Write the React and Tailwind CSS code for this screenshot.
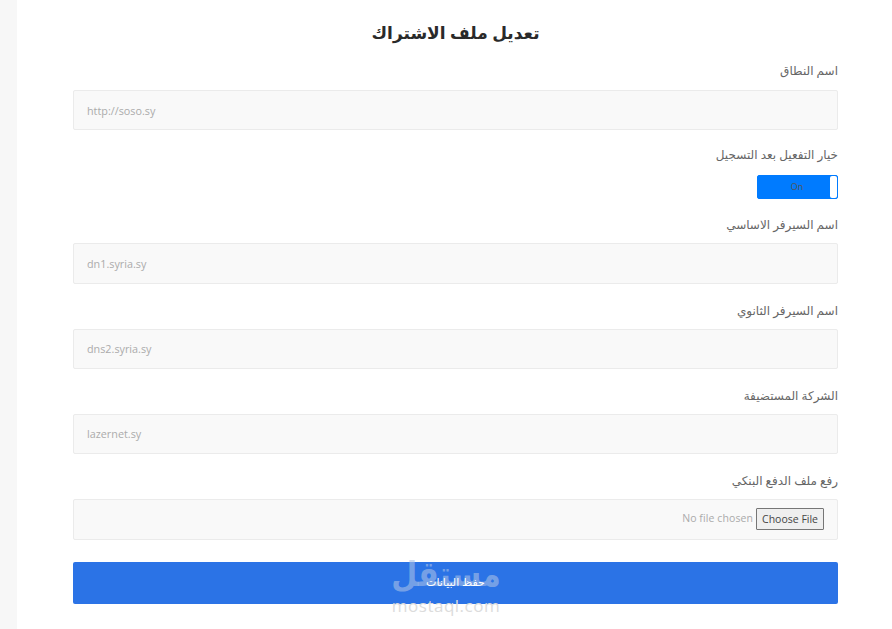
import React from 'react';

function Field({ label, value, className }) {
  return (
    <div className={className}>
      <label className="block h-[16px] text-[12px] leading-[16px] text-[#666]">{label}</label>
      <input
        readOnly
        dir="ltr"
        placeholder={value}
        className="mt-[10px] block h-[40.5px] w-full rounded-[2px] border border-[#ebebeb] bg-[#f9f9f9] px-[13px] text-left text-[10.8px] text-[#777] outline-none placeholder:text-[#ababab]"
      />
    </div>
  );
}

export default function App() {
  return (
    <div dir="rtl" className="relative flex h-[629px] w-[892px] overflow-hidden bg-white font-['Open_Sans','DejaVu_Sans',sans-serif]">
      <main className="flex w-[875px] flex-col pl-[56px] pr-[54px]">
        <h1 className="mt-[22px] h-[22px] text-center text-[17px] font-bold leading-[22px] text-[#2a2a2a]">تعديل ملف الاشتراك</h1>

        <Field label="اسم النطاق" value="http://soso.sy" className="mt-[19px] [&_input]:mt-[11px] [&_input]:h-[40px]" />

        <label className="mt-[17px] block h-[16px] text-[12px] leading-[16px] text-[#666]">خيار التفعيل بعد التسجيل</label>
        <div dir="ltr" className="mt-[12px] flex h-[24px] w-[81px] self-start rounded-[2px] border border-[#007bff] bg-[#007bff]">
          <span className="flex-1 pl-[6px] text-center text-[9px] leading-[22px] text-[#555]">On</span>
          <span className="h-full w-[7px] rounded-[2px] bg-white" />
        </div>

        <Field label="اسم السيرفر الاساسي" value="dn1.syria.sy" className="mt-[18px]" />
        <Field label="اسم السيرفر الثانوي" value="dns2.syria.sy" className="mt-[19px]" />
        <Field label="الشركة المستضيفة" value="lazernet.sy" className="mt-[18.5px]" />

        <label className="mt-[18.5px] block h-[16px] text-[12px] leading-[16px] text-[#666]">رفع ملف الدفع البنكي</label>
        <div className="mt-[10px] flex h-[41px] items-center gap-[3px] rounded-[2px] border border-[#ebebeb] bg-[#f9f9f9] px-[13px]">
          <button dir="ltr" className="h-[22px] rounded-[1px] border border-[#767676] bg-[#efefef] px-[5px] text-[10.5px] leading-[20px] text-[#444]">Choose File</button>
          <span dir="ltr" className="text-[10.5px] tracking-[0.1px] text-[#ababab]">No file chosen</span>
        </div>

        <button className="mt-[22px] h-[42px] w-full rounded-[2px] bg-[#2b73e6] text-[11px] text-white">
          <span className="relative z-10">حفظ البيانات</span>
        </button>
      </main>

      <aside className="w-[17px] bg-[#f7f7f7]" />

      {/* watermark */}
      <div dir="ltr" className="pointer-events-none absolute left-[391px] top-[556px] flex w-[110px] flex-col items-center">
        <span dir="rtl" className="origin-bottom scale-y-[1.15] text-[30px] font-bold leading-[40px] text-[#a9c0e6]/60">مستقل</span>
        <span className="text-[17px] font-medium leading-[20px] tracking-[0.5px] text-[#dcdcdc]">mostaql.com</span>
      </div>
    </div>
  );
}
